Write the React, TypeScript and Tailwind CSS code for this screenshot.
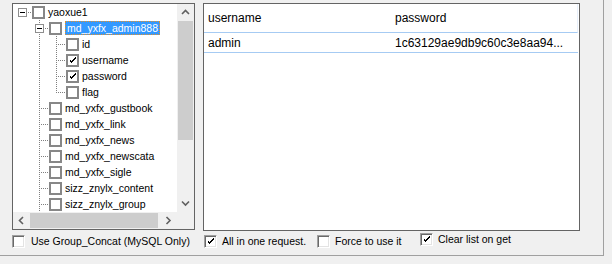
type Guide = "blank" | "pipe" | "tee" | "elbow" | "rootBox" | "branchBox";

const dotsV =
  "bg-[repeating-linear-gradient(to_bottom,#7f7f7f_0px,#7f7f7f_1px,transparent_1px,transparent_2px)]";
const dotsH =
  "bg-[repeating-linear-gradient(to_right,#7f7f7f_0px,#7f7f7f_1px,transparent_1px,transparent_2px)]";

const nodes: { guides: Guide[]; label: string; checked?: boolean; selected?: boolean }[] = [
  { guides: ["rootBox"], label: "yaoxue1" },
  { guides: ["blank", "branchBox"], label: "md_yxfx_admin888", selected: true },
  { guides: ["blank", "pipe", "tee"], label: "id" },
  { guides: ["blank", "pipe", "tee"], label: "username", checked: true },
  { guides: ["blank", "pipe", "tee"], label: "password", checked: true },
  { guides: ["blank", "pipe", "elbow"], label: "flag" },
  { guides: ["blank", "tee"], label: "md_yxfx_gustbook" },
  { guides: ["blank", "tee"], label: "md_yxfx_link" },
  { guides: ["blank", "tee"], label: "md_yxfx_news" },
  { guides: ["blank", "tee"], label: "md_yxfx_newscata" },
  { guides: ["blank", "tee"], label: "md_yxfx_sigle" },
  { guides: ["blank", "tee"], label: "sizz_znylx_content" },
  { guides: ["blank", "tee"], label: "sizz_znylx_group" },
];

const Tick = () => (
  <svg width="9" height="9" viewBox="0 0 9 9" shapeRendering="crispEdges">
    <path d="M1 3h1v3h1v1h1v-1h1v-1h1v-1h1v-1h1v-2h-1v1h-1v1h-1v1h-1v1h-1v-1h-1v-1z" fill="#000" />
  </svg>
);

const GuideCell = ({ kind }: { kind: Guide }) => (
  <div className="relative w-[17px] h-4 shrink-0">
    {(kind === "pipe" || kind === "tee" || kind === "branchBox") && (
      <div className={`absolute left-[8px] top-0 h-4 w-px ${dotsV}`} />
    )}
    {kind === "elbow" && <div className={`absolute left-[8px] top-0 h-[9px] w-px ${dotsV}`} />}
    {kind !== "blank" && kind !== "pipe" && (
      <div className={`absolute left-[8px] top-[8px] w-[9px] h-px ${dotsH}`} />
    )}
    {(kind === "rootBox" || kind === "branchBox") && (
      <div className="absolute left-[4px] top-[4px] w-[9px] h-[9px] border border-[#8e8e8e] bg-white flex items-center justify-center">
        <div className="w-[5px] h-px bg-black" />
      </div>
    )}
  </div>
);

const Chevron = ({ dir }: { dir: "up" | "down" | "left" | "right" }) => {
  const pts = {
    up: "1,5 4.5,1.5 8,5",
    down: "1,1.5 4.5,5 8,1.5",
    left: "5,1 1.5,4.5 5,8",
    right: "1.5,1 5,4.5 1.5,8",
  }[dir];
  const vertical = dir === "up" || dir === "down";
  return (
    <svg width={vertical ? 9 : 7} height={vertical ? 7 : 9} viewBox={vertical ? "0 0 9 7" : "0 0 7 9"}>
      <polyline points={pts} fill="none" stroke="#606060" strokeWidth="1.6" />
    </svg>
  );
};

const ClassicCheck = ({ checked }: { checked?: boolean }) => (
  <div className="w-[13px] h-[13px] shrink-0 bg-white border border-t-[#a0a0a0] border-l-[#a0a0a0] border-b-[#ffffff] border-r-[#ffffff] shadow-[inset_1px_1px_0_#696969,inset_-1px_-1px_0_#e3e3e3] flex items-center justify-center">
    {checked && <Tick />}
  </div>
);

const Option = ({ label, checked, width, gap }: { label: string; checked?: boolean; width: string; gap: string }) => (
  <div className={`flex items-center h-[15px] ${width}`}>
    <ClassicCheck checked={checked} />
    <span className={`${gap} text-[10.5px] leading-[15px] text-black whitespace-nowrap`}>{label}</span>
  </div>
);

const TreePanel = () => (
  <div className="w-[183px] h-[227px] shrink-0 border border-[#646464] flex flex-col bg-white">
    <div className="flex h-[208px]">
      <div className="w-[164px] h-[208px] overflow-hidden bg-white">
        {nodes.map((node) => (
          <div key={node.label} className="flex items-center h-4 pl-px">
            {node.guides.map((g, i) => (
              <GuideCell key={i} kind={g} />
            ))}
            <div className="ml-px w-[13px] h-[13px] shrink-0 border-2 border-[#878787] bg-white flex items-center justify-center">
              {node.checked && <Tick />}
            </div>
            {node.selected ? (
              <span className="ml-[3px] h-[14px] px-px border border-dotted border-[#e3902a] bg-[#3399ff] text-white text-[10.5px] leading-[12px] whitespace-nowrap">
                {node.label}
              </span>
            ) : (
              <span className="ml-[3px] text-[10.5px] leading-[14px] text-black whitespace-nowrap">{node.label}</span>
            )}
          </div>
        ))}
      </div>
      <div className="w-[17px] h-[208px] bg-[#f0f0f0] flex flex-col">
        <div className="h-[17px] flex items-center justify-center">
          <Chevron dir="up" />
        </div>
        <div className="h-[119px] mx-px bg-[#cdcdcd]" />
        <div className="flex-1" />
        <div className="h-[17px] flex items-center justify-center">
          <Chevron dir="down" />
        </div>
      </div>
    </div>
    <div className="flex h-[17px] bg-[#f0f0f0]">
      <div className="w-[164px] flex">
        <div className="w-[17px] flex items-center justify-center">
          <Chevron dir="left" />
        </div>
        <div className="w-[128px] my-px bg-[#cdcdcd]" />
        <div className="flex-1" />
        <div className="w-[17px] flex items-center justify-center">
          <Chevron dir="right" />
        </div>
      </div>
      <div className="w-[17px]" />
    </div>
  </div>
);

const ResultList = () => (
  <div className="w-[377px] h-[228px] shrink-0 border border-[#646464] bg-white text-[12px] text-black">
    <div className="w-[374px] flex h-[29px] items-center border-b border-[#a6cbf3] border-r border-r-[#e8f0fb]">
      <div className="w-[188px] pl-[4px]">username</div>
      <div className="flex-1 pl-[3px]">password</div>
    </div>
    <div className="w-[374px] flex h-[20px] items-center border-b border-[#a6cbf3]">
      <div className="w-[188px] pl-[4px]">admin</div>
      <div className="flex-1 pl-[3px] whitespace-nowrap">1c63129ae9db9c60c3e8aa94...</div>
    </div>
  </div>
);

export default function App() {
  return (
    <div className="w-[612px] h-[264px] bg-[#f0f0f0] font-['Liberation_Sans',Arial,sans-serif] overflow-hidden">
      <div className="w-[604px] h-[256px] border-r border-b border-[#a0a0a0] pl-[12px] pt-[3px]">
        <div className="flex items-start gap-[8px]">
          <TreePanel />
          <ResultList />
        </div>
        <div className="flex items-start mt-[3px]">
          <Option label="Use Group_Concat (MySQL Only)" width="w-[192px]" gap="ml-[6px]" />
          <Option label="All in one request." checked width="w-[113px]" gap="ml-[5px]" />
          <Option label="Force to use it" width="w-[103px]" gap="ml-[5px]" />
          <div className="-mt-[2px]">
            <Option label="Clear list on get" checked width="w-[120px]" gap="ml-[5px]" />
          </div>
        </div>
      </div>
    </div>
  );
}
